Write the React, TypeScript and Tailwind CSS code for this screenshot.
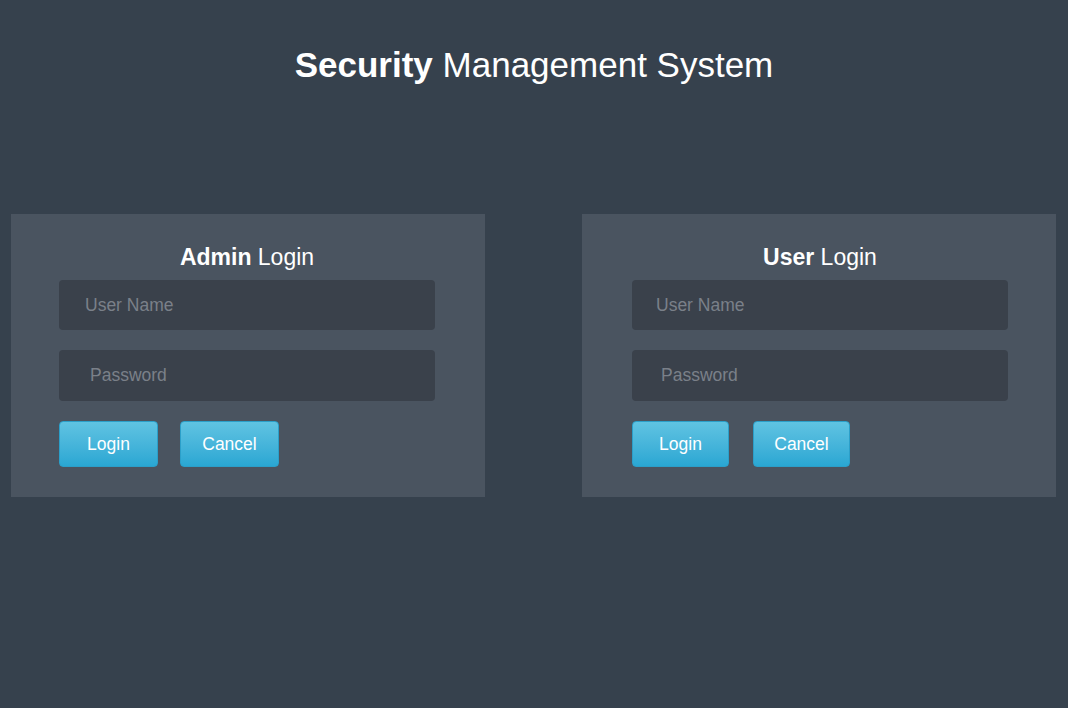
export default function App() {
  const panels = [
    { bold: "Admin", pad: "pl-[48px] pr-[50px]", u: "pl-[26px]", pw: "pl-[31px]", gap: "gap-[22px]", btn: "w-[99px]" },
    { bold: "User", pad: "pl-[50px] pr-[48px]", u: "pl-[24px]", pw: "pl-[29px]", gap: "gap-[24px]", btn: "w-[97px]" },
  ];

  return (
    <div className="w-full h-screen bg-[#36414d] font-['Liberation_Sans',Arial,sans-serif] text-white">
      <h1 className="pt-[45px] text-center text-[35px] leading-[40px] font-normal">
        <span className="font-bold">Security</span> Management System
      </h1>

      <div className="mt-[129px] flex justify-between pl-[11px] pr-[12px]">
        {panels.map((p) => (
          <div key={p.bold} className={"w-[474px] bg-[#4a5460] pt-[29px] pb-[30px] " + p.pad}>
            <h2 className="text-center text-[23px] leading-[28px]">
              <span className="font-bold">{p.bold}</span> Login
            </h2>
            <input
              type="text"
              placeholder="User Name"
              className={"mt-[9px] block w-full h-[50px] rounded-[4px] bg-[#3a414b] text-[17.5px] text-white outline-none placeholder:text-[#7a8089] " + p.u}
            />
            <input
              type="password"
              placeholder="Password"
              className={"mt-[20px] block w-full h-[51px] rounded-[4px] bg-[#3a414b] text-[17.5px] text-white outline-none placeholder:text-[#7a8089] " + p.pw}
            />
            <div className={"mt-[20px] flex " + p.gap}>
              <button className={p.btn + " h-[46px] rounded-[4px] border border-[#2b9fc9] bg-gradient-to-b from-[#5fc3e2] to-[#29a7d3] text-[17.5px] text-white"}>
                Login
              </button>
              <button className={p.btn + " h-[46px] rounded-[4px] border border-[#2b9fc9] bg-gradient-to-b from-[#5fc3e2] to-[#29a7d3] text-[17.5px] text-white"}>
                Cancel
              </button>
            </div>
          </div>
        ))}
      </div>
    </div>
  );
}
